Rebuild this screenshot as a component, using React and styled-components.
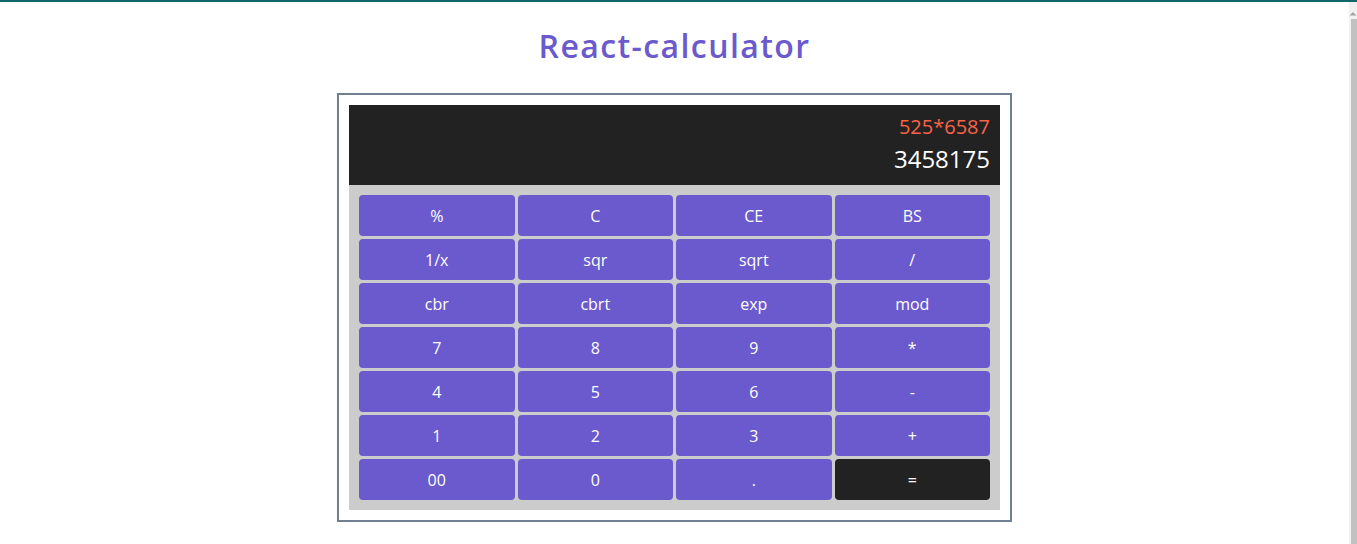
import React, { useState } from "react";
import styled, { createGlobalStyle } from "styled-components";

const keys = [
   "%", "C", "CE", "BS",
   "1/x", "sqr", "sqrt", "/",
   "cbr", "cbrt", "exp", "mod",
   "7", "8", "9", "*",
   "4", "5", "6", "-",
   "1", "2", "3", "+",
   "00", "0", ".", "=",
];

const App = () => {
   const [expression] = useState("525*6587");
   const [result] = useState("3458175");

   return (
      <Page>
         <GlobalStyle />
         <Main>
            <Title>React-calculator</Title>
            <Calculator>
               <Screen>
                  <Expression>{expression}</Expression>
                  <Result>{result}</Result>
               </Screen>
               <Keypad>
                  {keys.map((k) => (
                     <Key key={k} $equal={k === "="}>
                        {k}
                     </Key>
                  ))}
               </Keypad>
            </Calculator>
         </Main>
         <ScrollTrack>
            <ScrollArrow>
               <svg width="8" height="17" viewBox="0 0 8 17">
                  <path d="M4 10 L7.5 13.5 L0.5 13.5 Z" fill="#a3a3a3" />
               </svg>
            </ScrollArrow>
            <ScrollThumb />
         </ScrollTrack>
      </Page>
   );
};

export default App;


const GlobalStyle = createGlobalStyle`
   html, body {
      overflow: hidden;
   }
   body {
      margin: 0;
      border-top: 2px solid #11676a;
      font-family: "Open Sans", "Liberation Sans", sans-serif;
      background: #fff;
   }
`

const Page = styled.div`
   display: flex;
   height: 542px;
`

const Main = styled.div`
   flex: 1;
   display: flex;
   flex-direction: column;
   align-items: center;
`

const ScrollTrack = styled.div`
   width: 8px;
   display: flex;
   flex-direction: column;
   background: #f1f1f1;
`

const ScrollArrow = styled.div`
   height: 17px;
   display: flex;
`

const ScrollThumb = styled.div`
   flex: 1;
   margin-left: 2px;
   background: #c1c1c1;
`

const Title = styled.h1`
   margin: 0;
   padding-top: 24px;
   font-size: 32px;
   line-height: 40px;
   font-weight: 600;
   letter-spacing: 1.4px;
   color: #6a5acd;
`

const Calculator = styled.div`
   width: 651px;
   margin-top: 27px;
   padding: 10px;
   border: 2px solid #708090;
`

const Screen = styled.div`
   height: 80px;
   box-sizing: border-box;
   padding: 8px 10px 0;
   background: #222;
   display: flex;
   flex-direction: column;
   align-items: flex-end;
`

const Expression = styled.div`
   font-size: 20px;
   line-height: 28px;
   color: #fa6347;
`

const Result = styled.div`
   font-size: 24px;
   line-height: 36px;
   color: #fff;
`

const Keypad = styled.div`
   background: #ccc;
   padding: 10px;
   display: grid;
   grid-template-columns: repeat(4, 1fr);
   grid-auto-rows: 41px;
   gap: 3px;
`

const Key = styled.button`
   border: none;
   border-radius: 4px;
   background: ${(p) => (p.$equal ? "#222" : "#6a5acd")};
   color: #fff;
   font-family: inherit;
   font-size: 16px;
   cursor: pointer;
`
